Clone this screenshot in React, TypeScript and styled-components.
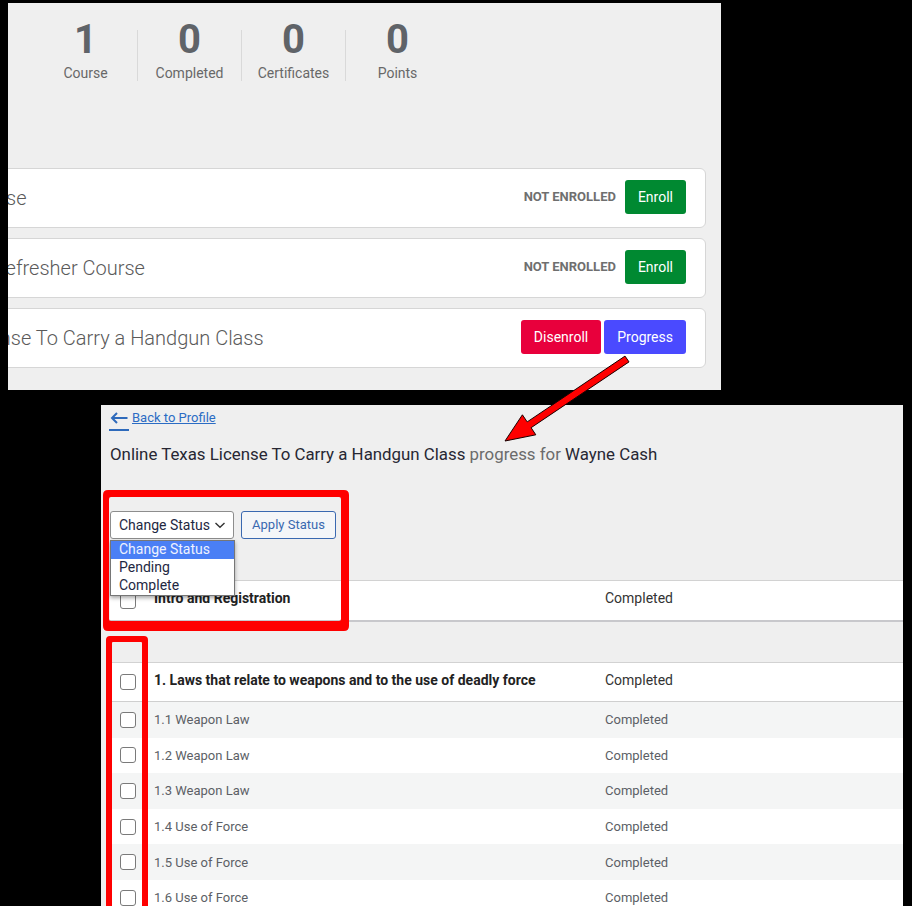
import React from "react";
import styled, { createGlobalStyle } from "styled-components";

const GlobalStyle = createGlobalStyle`
  html, body {
    margin: 0;
    padding: 0;
    background: #000;
  }
  body {
    font-family: Roboto, "Liberation Sans", Arial, sans-serif;
  }
  * {
    box-sizing: border-box;
  }
`;

/* ---------- page frame ---------- */

const Page = styled.div`
  position: relative;
  width: 912px;
  height: 906px;
  overflow: hidden;
  background: #000;
  display: flex;
  flex-direction: column;
  align-items: flex-start;
`;

/* ---------- profile screen (courses list) ---------- */

const ProfileShot = styled.section`
  flex-shrink: 0;
  margin: 3px 0 0 8px;
  width: 713px;
  height: 387px;
  padding-right: 15px;
  background: #efefef;
  overflow: hidden;
`;

const StatsRow = styled.div`
  display: flex;
  align-items: flex-start;
  padding: 15px 0 0 26px;
`;

const Stat = styled.div`
  width: 103px;
  text-align: center;
`;

const StatValue = styled.div`
  font-size: 40px;
  line-height: 44px;
  font-weight: 700;
  color: #5f6368;
`;

const StatLabel = styled.div`
  margin-top: 1px;
  font-size: 14px;
  line-height: 20px;
  color: #686868;
`;

const StatDivider = styled.div`
  width: 1px;
  height: 51px;
  margin-top: 12px;
  background: #d9d9d9;
`;

const CourseList = styled.div`
  display: flex;
  flex-direction: column;
  gap: 10px;
  margin: 85px 0 0 -181px;
`;

const CourseCard = styled.div`
  display: flex;
  align-items: center;
  height: 60px;
  padding: 0 19px 0 20px;
  background: #fff;
  border: 1px solid #d6d6d6;
  border-radius: 6px;
`;

const CourseTitle = styled.div`
  flex: 1;
  white-space: nowrap;
  font-size: 20px;
  font-weight: 300;
  color: #5a5a5a;
`;

const CourseActions = styled.div`
  display: flex;
  align-items: center;
  gap: 3px;
  margin-bottom: 3px;
`;

const StatusTag = styled.span`
  margin-right: 6px;
  font-size: 13px;
  font-weight: 700;
  color: #6f6f6f;
  text-transform: uppercase;
`;

const toneColors = {
  enroll: "#008931",
  disenroll: "#e8003c",
  progress: "#4a4aff",
} as const;

type Tone = keyof typeof toneColors;

const ActionButton = styled.button<{ $tone: Tone }>`
  height: 34px;
  padding: 0 13px;
  border: none;
  border-radius: 3px;
  background: ${(p) => toneColors[p.$tone]};
  color: #fff;
  font-family: Roboto, "Liberation Sans", Arial, sans-serif;
  font-size: 14px;
  cursor: pointer;
`;

/* ---------- progress screen ---------- */

const ProgressShot = styled.section`
  flex: 1;
  margin: 15px 0 0 101px;
  width: 802px;
  padding-left: 9px;
  background: #efefef;
  overflow: hidden;
`;

const BackLink = styled.a`
  display: inline-flex;
  align-items: flex-start;
  gap: 3px;
  color: #2b6cc4;
  text-decoration: none;
  cursor: pointer;
`;

const BackArrow = styled.span`
  display: block;
  width: 20px;
  margin: 7px 0 0 -1px;
  padding: 0 0 5px 1px;
  border-bottom: 2px solid #2e6abb;
  line-height: 0;
`;

const BackText = styled.span`
  margin-top: 5px;
  font-size: 13px;
  line-height: 15px;
  text-decoration: underline;
`;

const Heading = styled.h1`
  margin: 13px 0 0;
  font-size: 16.85px;
  line-height: 20px;
  font-weight: 400;
  color: #272733;
`;

const Muted = styled.span`
  color: #6b6b6b;
`;

const Controls = styled.div`
  position: relative;
  z-index: 2;
  display: flex;
  gap: 7px;
  margin-top: 47px;
  height: 28px;
`;

const StatusSelect = styled.div`
  display: flex;
  align-items: center;
  justify-content: space-between;
  width: 124px;
  height: 28px;
  padding: 0 7px 0 8px;
  background: #fff;
  border: 1px solid #8d8d8d;
  border-radius: 3px;
  font-size: 14px;
  color: #1e2742;
`;

const ApplyButton = styled.button`
  width: 95px;
  height: 28px;
  padding: 0 0 2px;
  background: #f4f6f8;
  border: 1px solid #3a69b0;
  border-radius: 3px;
  font-family: Roboto, "Liberation Sans", Arial, sans-serif;
  font-size: 13px;
  color: #3a69b0;
`;

const OptionList = styled.ul`
  position: absolute;
  top: 29px;
  left: 0;
  width: 125px;
  margin: 0;
  padding: 0;
  list-style: none;
  background: #fff;
  border: 1px solid #767676;
  box-shadow: 0 2px 4px rgba(0, 0, 0, 0.35);
`;

const Option = styled.li<{ $active?: boolean }>`
  height: 18px;
  padding-left: 8px;
  font-size: 14px;
  line-height: 17px;
  color: ${(p) => (p.$active ? "#eef2ff" : "#1e2742")};
  background: ${(p) => (p.$active ? "#4a7ff5" : "transparent")};
`;

const Table = styled.div`
  margin-top: 41px;
  width: 793px;
`;

const CheckCell = styled.div`
  padding-left: 10px;
  line-height: 0;
`;

const CheckBox = styled.input.attrs({ type: "checkbox" })`
  appearance: none;
  margin: 0;
  width: 16px;
  height: 16px;
  border: 1.5px solid #7a7a7a;
  border-radius: 3px;
  background: #fff;
`;

const NameCell = styled.div<{ $bold?: boolean }>`
  white-space: nowrap;
  font-weight: ${(p) => (p.$bold ? 700 : 400)};
  color: ${(p) => (p.$bold ? "#222" : "inherit")};
`;

const StatusCell = styled.div`
  white-space: nowrap;
`;

type RowVariant = "intro" | "section" | "lesson";

const rowHeights: Record<RowVariant, string> = {
  intro: "42px",
  section: "40px",
  lesson: "35.6px",
};

const Row = styled.div<{ $variant: RowVariant; $shade?: boolean }>`
  display: grid;
  grid-template-columns: 44px 451px 1fr;
  align-items: center;
  height: ${(p) => rowHeights[p.$variant]};
  background: ${(p) => (p.$shade ? "#f4f5f5" : "#fff")};
  border-top: ${(p) => (p.$variant === "lesson" ? "none" : "1px solid #d2d2d2")};
  border-bottom: ${(p) =>
    p.$variant === "intro" ? "2px solid #c8c8cc" : p.$variant === "section" ? "1px solid #cfcfcf" : "none"};
  font-size: ${(p) => (p.$variant === "lesson" ? "13px" : "14px")};
  color: ${(p) => (p.$variant === "lesson" ? "#5c5f66" : "#333")};

  & > ${NameCell}, & > ${StatusCell} {
    margin-bottom: ${(p) => (p.$variant === "intro" ? "6px" : p.$variant === "section" ? "4px" : "0")};
  }
`;

const TableGap = styled.div`
  height: 40px;
`;

/* ---------- annotation layer ---------- */

const Annotations = styled.svg`
  position: absolute;
  top: 0;
  left: 0;
  z-index: 10;
  pointer-events: none;
`;

/* ---------- data ---------- */

const stats = [
  { value: 1, label: "Course" },
  { value: 0, label: "Completed" },
  { value: 0, label: "Certificates" },
  { value: 0, label: "Points" },
];

const courses: { title: string; enrolled: boolean }[] = [
  { title: "Online Texas Course", enrolled: false },
  { title: "Texas State LTC Refresher Course", enrolled: false },
  { title: "Online Texas License To Carry a Handgun Class", enrolled: true },
];

const lessons = [
  "1.1 Weapon Law",
  "1.2 Weapon Law",
  "1.3 Weapon Law",
  "1.4 Use of Force",
  "1.5 Use of Force",
  "1.6 Use of Force",
];

export default function App() {
  return (
    <>
      <GlobalStyle />
      <Page>
        <ProfileShot>
          <StatsRow>
            {stats.map((s, i) => (
              <React.Fragment key={s.label}>
                {i > 0 && <StatDivider />}
                <Stat>
                  <StatValue>{s.value}</StatValue>
                  <StatLabel>{s.label}</StatLabel>
                </Stat>
              </React.Fragment>
            ))}
          </StatsRow>

          <CourseList>
            {courses.map((c) => (
              <CourseCard key={c.title}>
                <CourseTitle>{c.title}</CourseTitle>
                <CourseActions>
                  {c.enrolled ? (
                    <>
                      <ActionButton $tone="disenroll">Disenroll</ActionButton>
                      <ActionButton $tone="progress">Progress</ActionButton>
                    </>
                  ) : (
                    <>
                      <StatusTag>Not enrolled</StatusTag>
                      <ActionButton $tone="enroll">Enroll</ActionButton>
                    </>
                  )}
                </CourseActions>
              </CourseCard>
            ))}
          </CourseList>
        </ProfileShot>

        <ProgressShot>
          <BackLink>
            <BackArrow>
              <svg width="18" height="12" viewBox="0 0 18 12" fill="none">
                <path d="M2 6H17.5" stroke="#2e6abb" strokeWidth="2" />
                <path d="M7 1L2 6L7 11" stroke="#2e6abb" strokeWidth="2" strokeLinejoin="miter" />
              </svg>
            </BackArrow>
            <BackText>Back to Profile</BackText>
          </BackLink>

          <Heading>
            Online Texas License To Carry a Handgun Class <Muted>progress for</Muted> Wayne Cash
          </Heading>

          <Controls>
            <StatusSelect>
              <span>Change Status</span>
              <svg width="12" height="8" viewBox="0 0 12 8" fill="none">
                <path d="M1.5 2L6 6.2L10.5 2" stroke="#333" strokeWidth="1.4" />
              </svg>
            </StatusSelect>
            <ApplyButton>Apply Status</ApplyButton>
            <OptionList>
              <Option $active>Change Status</Option>
              <Option>Pending</Option>
              <Option>Complete</Option>
            </OptionList>
          </Controls>

          <Table>
            <Row $variant="intro">
              <CheckCell>
                <CheckBox />
              </CheckCell>
              <NameCell $bold>Intro and Registration</NameCell>
              <StatusCell>Completed</StatusCell>
            </Row>
            <TableGap />
            <Row $variant="section">
              <CheckCell>
                <CheckBox />
              </CheckCell>
              <NameCell $bold>1. Laws that relate to weapons and to the use of deadly force</NameCell>
              <StatusCell>Completed</StatusCell>
            </Row>
            {lessons.map((l, i) => (
              <Row key={l} $variant="lesson" $shade={i % 2 === 0}>
                <CheckCell>
                  <CheckBox />
                </CheckCell>
                <NameCell>{l}</NameCell>
                <StatusCell>Completed</StatusCell>
              </Row>
            ))}
          </Table>
        </ProgressShot>

        <Annotations width="912" height="906" viewBox="0 0 912 906">
          <path
            fillRule="evenodd"
            fill="#ff0000"
            d="M108 490H344Q349 490 349 495V626Q349 631 344 631H108Q103 631 103 626V495Q103 490 108 490Z
               M111 497H339Q341 497 341 499V619Q341 621 339 621H111Q109 621 109 619V499Q109 497 111 497Z"
          />
          <path
            fillRule="evenodd"
            fill="#ff0000"
            d="M110 636H144Q148 636 148 640V920H106V640Q106 636 110 636Z
               M113 642H141Q142 642 142 643V920H112V643Q112 642 113 642Z"
          />
          <polygon
            points="625,356.1 527.2,421.9 522.4,414.8 505,441 535.8,434.8 531.1,427.7 629,361.9"
            fill="#ff0000"
            stroke="#1a0000"
            strokeWidth="1"
            strokeLinejoin="miter"
          />
        </Annotations>
      </Page>
    </>
  );
}
